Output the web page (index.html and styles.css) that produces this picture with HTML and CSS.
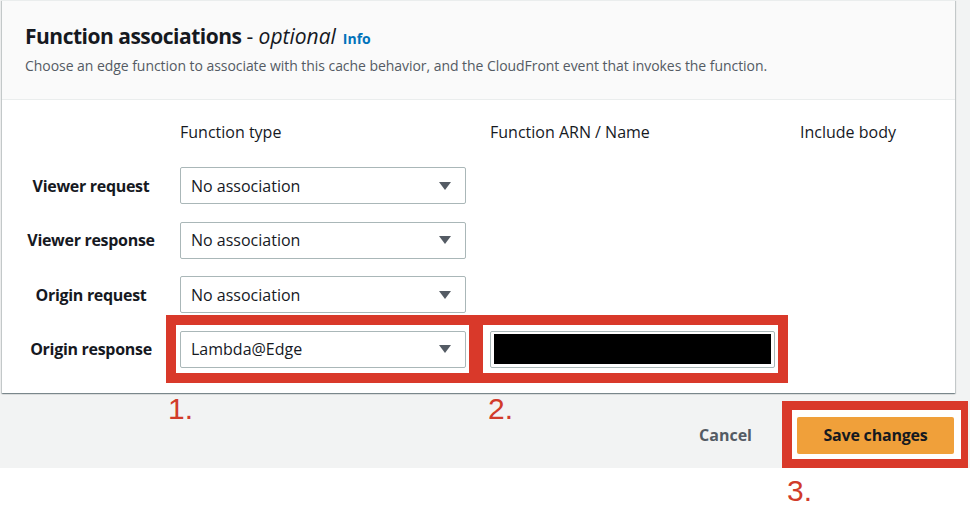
FILE: index.html
```html
<!DOCTYPE html>
<html lang="en">
<head>
<meta charset="utf-8">
<title>Function associations</title>
<link rel="stylesheet" href="styles.css">
</head>
<body>
<div class="page">
  <div class="gray">
    <section class="card">
      <header class="card-head">
        <h2 class="title">Function associations <span class="opt">- <i>optional</i></span> <a class="info" href="#">Info</a></h2>
        <p class="desc">Choose an edge function to associate with this cache behavior, and the CloudFront event that invokes the function.</p>
      </header>
      <div class="card-body">
        <div class="row head">
          <div class="label"></div>
          <div class="c2">Function type</div>
          <div class="c3">Function ARN / Name</div>
          <div class="c4">Include body</div>
        </div>
        <div class="row">
          <div class="label">Viewer request</div>
          <div class="c2"><div class="select"><span>No association</span><span class="caret"></span></div></div>
        </div>
        <div class="row">
          <div class="label">Viewer response</div>
          <div class="c2"><div class="select"><span>No association</span><span class="caret"></span></div></div>
        </div>
        <div class="row">
          <div class="label">Origin request</div>
          <div class="c2"><div class="select"><span>No association</span><span class="caret"></span></div></div>
        </div>
        <div class="row">
          <div class="label">Origin response</div>
          <div class="c2"><div class="mark mark1"><div class="select"><span>Lambda@Edge</span><span class="caret"></span></div></div></div>
          <div class="c3"><div class="mark mark2"><div class="input"><div class="redacted"></div></div></div></div>
        </div>
      </div>
    </section>
    <footer class="foot">
      <span class="num n1">1.</span>
      <span class="num n2">2.</span>
      <div class="actions">
        <a class="cancel" href="#">Cancel</a>
        <div class="mark mark3"><button class="save" type="button">Save changes</button></div>
      </div>
    </footer>
  </div>
  <div class="below">
    <span class="num n3">3.</span>
  </div>
</div>
</body>
</html>
```

FILE: styles.css
```css
* { box-sizing: border-box; }
html, body { margin: 0; padding: 0; background: #ffffff; }
body { font-family: "Open Sans", "Noto Sans", sans-serif; color: #16191f; }

.page { width: 970px; height: 518px; overflow: hidden; }
.gray { background: #f2f3f3; }

.card {
  margin-left: 2px;
  width: 953px;
  background: #ffffff;
  border-top: 1px solid #eaeded;
  box-shadow: 0 1px 1px 0 rgba(0, 28, 36, 0.3), 1px 1px 1px 0 rgba(0, 28, 36, 0.15), -1px 1px 1px 0 rgba(0, 28, 36, 0.15);
}

.card-head {
  background: #fafafa;
  border-bottom: 1px solid #eaeded;
  padding: 21px 25px 0 23px;
  height: 99px;
}
.title {
  margin: 0;
  font-size: 21px;
  line-height: 28px;
  font-weight: 700;
  letter-spacing: -0.5px;
  color: #16191f;
}
.opt { font-weight: 400; letter-spacing: 0; }
.info {
  font-size: 14px;
  font-weight: 700;
  letter-spacing: 0;
  margin-left: 2px;
  color: #0073bb;
  text-decoration: none;
}
.desc {
  margin: 3px 0 0;
  font-size: 14px;
  line-height: 20px;
  letter-spacing: -0.05px;
  color: #545b64;
}

.card-body { padding: 21px 0 25px; }
.row { display: flex; align-items: center; margin-top: 17.5px; }
.row.head { margin-top: 0; padding-bottom: 6.5px; font-size: 16px; line-height: 22px; }
.label {
  width: 178px;
  flex: none;
  text-align: center;
  font-size: 16px;
  font-weight: 700;
  line-height: 22px;
  letter-spacing: -0.3px;
}
.c2 { width: 286px; margin-right: 24px; flex: none; }
.c3 { width: 285px; margin-right: 25px; flex: none; }
.c4 { flex: 1; }

.select {
  height: 37px;
  border: 1px solid #aab7b8;
  border-radius: 2px;
  background: #fff;
  display: flex;
  align-items: center;
  justify-content: space-between;
  padding: 0 14px 0 10px;
  font-size: 16px;
}
.caret {
  width: 0;
  height: 0;
  border-left: 6px solid transparent;
  border-right: 6px solid transparent;
  border-top: 8px solid #545b64;
}

.input {
  height: 37px;
  border: 1px solid #aab7b8;
  border-radius: 2px;
  background: #fff;
  padding: 2px 3px 3px 3px;
}
.redacted { width: 100%; height: 100%; background: #000; }

.mark { border-style: solid; border-color: #d9392a; background: #fff; }
.mark1 { border-width: 10px 7px 10px 10px; padding: 6px 3px 5px 4px; margin: -16px -10px -15px -14px; }
.mark2 { border-width: 10px 10px 10px 7px; padding: 6px 3px 5px 7px; margin: -16px -13px -15px -14px; }

.foot {
  height: 75px;
  display: flex;
  align-items: flex-start;
}
.num {
  font-family: "Liberation Sans", Arial, sans-serif;
  font-size: 30px;
  line-height: 30px;
  color: #d13b2a;
}
.n1 { flex: none; margin: 1px 0 0 168px; width: 320px; }
.n2 { flex: none; margin-top: 1px; width: 60px; }
.actions {
  flex: none;
  margin-left: auto;
  margin-right: 16px;
  margin-top: 24px;
  display: flex;
  align-items: center;
}
.cancel {
  font-size: 16px;
  font-weight: 700;
  color: #545b64;
  text-decoration: none;
  margin-right: 45px;
}
.mark3 { border-width: 9px 7px 9px 10px; padding: 7px 7px 5px 5px; margin: -16px -14px -14px -15px; background: #fff; }
.save {
  display: block;
  width: 157px;
  height: 37px;
  border: none;
  border-radius: 2px;
  background: #f0a03a;
  color: #16191f;
  font-family: "Open Sans", "Noto Sans", sans-serif;
  font-size: 16px;
  font-weight: 700;
  letter-spacing: -0.2px;
  padding: 0;
}
.below { height: 52px; }
.n3 { display: inline-block; margin: 8px 0 0 787px; }
```
